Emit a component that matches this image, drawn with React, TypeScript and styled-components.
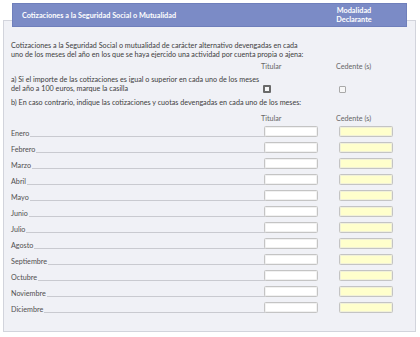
import styled, { createGlobalStyle } from "styled-components";

const GlobalStyle = createGlobalStyle`
  html, body {
    margin: 0;
    padding: 0;
    background: #ffffff;
  }
  body {
    font-family: Lato, "Open Sans", "Liberation Sans", sans-serif;
    color: #404040;
  }
`;

const Page = styled.div`
  padding: 3px 4px 0 3px;
  width: 420px;
  box-sizing: border-box;
`;

const TabHeader = styled.div`
  position: relative;
  z-index: 1;
  display: flex;
  align-items: center;
  justify-content: space-between;
  height: 24px;
  margin: 0 9px -7px 9px;
  background: #7b8bc6;
  border: 1px solid #6f7fbb;
  box-sizing: border-box;
  color: #fff;
  font-weight: 700;
  font-size: 7.3px;
`;

const TabTitle = styled.span`
  padding-left: 9px;
`;

const TabSide = styled.span`
  width: 60px;
  margin-right: 22px;
  text-align: center;
  line-height: 9px;
`;

const Panel = styled.div`
  background: #f0f1f6;
  border: 1px solid #d2d4dc;
  padding: 20px 4px 18px 7px;
  font-size: 7.2px;
  line-height: 9px;
`;

const Intro = styled.p`
  margin: 0;
  white-space: nowrap;
`;

const Grid = styled.div<{ $mt: number }>`
  display: grid;
  grid-template-columns: 1fr 75px 75px;
  align-items: end;
  margin-top: ${(p) => p.$mt}px;
`;

const ColLabel = styled.span`
  color: #666;
`;

const Statement = styled.div`
  white-space: nowrap;
`;

const Check = styled.span<{ $strong?: boolean }>`
  display: block;
  box-sizing: border-box;
  width: ${(p) => (p.$strong ? 8 : 7)}px;
  height: ${(p) => (p.$strong ? 8 : 7)}px;
  margin: 0 0 0 ${(p) => (p.$strong ? 2 : 3)}px;
  background: #f7f7f7;
  border: ${(p) => (p.$strong ? "2px solid #6a6a6a" : "1px solid #a9a9a9")};
  border-radius: 1px;
`;

const Line = styled.div<{ $mt: number }>`
  margin-top: ${(p) => p.$mt}px;
  white-space: nowrap;
`;

const Months = styled.div`
  display: flex;
  flex-direction: column;
  gap: 5px;
  margin-top: 3.5px;
`;

const MonthRow = styled.div`
  display: grid;
  grid-template-columns: 1fr 75px 75px;
  align-items: end;
  height: 11px;
`;

const MonthLabel = styled.div`
  display: flex;
  align-items: flex-end;
  color: #505050;
  margin-bottom: -1px;
`;

const Leader = styled.span`
  flex: 1;
  margin: 0 -4px 1px 1px;
  border-bottom: 1px solid #c9cad0;
`;

const Field = styled.input<{ $yellow?: boolean }>`
  display: block;
  box-sizing: border-box;
  width: 54px;
  height: 11px;
  margin: 0 0 0 3px;
  padding: 0 2px;
  font-size: 7px;
  background: ${(p) => (p.$yellow ? "#ffffcc" : "#ffffff")};
  border: 1px solid #c4c4c4;
  border-radius: 1.5px;
  box-shadow: inset 0 0 0 0.5px #e4e4e4;
  outline: none;
`;

const months = [
  "Enero",
  "Febrero",
  "Marzo",
  "Abril",
  "Mayo",
  "Junio",
  "Julio",
  "Agosto",
  "Septiembre",
  "Octubre",
  "Noviembre",
  "Diciembre",
];

export default function App() {
  return (
    <Page>
      <GlobalStyle />
      <TabHeader>
        <TabTitle>Cotizaciones a la Seguridad Social o Mutualidad</TabTitle>
        <TabSide>
          Modalidad
          <br />
          Declarante
        </TabSide>
      </TabHeader>
      <Panel>
        <Intro>
          Cotizaciones a la Seguridad Social o mutualidad de carácter alternativo devengadas en cada
          <br />
          uno de los meses del año en los que se haya ejercido una actividad por cuenta propia o ajena:
        </Intro>
        <Grid $mt={3}>
          <span />
          <ColLabel>Titular</ColLabel>
          <ColLabel>Cedente (s)</ColLabel>
        </Grid>
        <Grid $mt={4}>
          <Statement>
            a) Si el importe de las cotizaciones es igual o superior en cada uno de los meses
            <br />
            del año a 100 euros, marque la casilla
          </Statement>
          <Check $strong />
          <Check />
        </Grid>
        <Line $mt={4.5}>
          b) En caso contrario, indique las cotizaciones y cuotas devengadas en cada uno de los meses:
        </Line>
        <Grid $mt={7}>
          <span />
          <ColLabel>Titular</ColLabel>
          <ColLabel>Cedente (s)</ColLabel>
        </Grid>
        <Months>
          {months.map((m) => (
            <MonthRow key={m}>
              <MonthLabel>
                {m}
                <Leader />
              </MonthLabel>
              <Field />
              <Field $yellow />
            </MonthRow>
          ))}
        </Months>
      </Panel>
    </Page>
  );
}
